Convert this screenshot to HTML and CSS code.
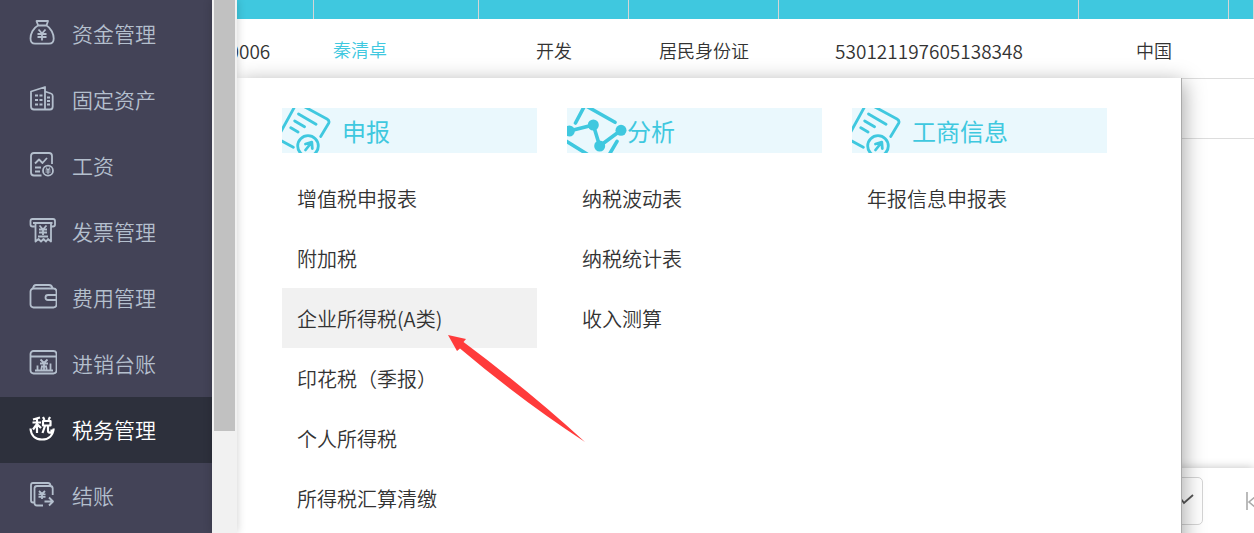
FILE: index.html
```html
<!DOCTYPE html>
<html lang="zh-CN">
<head>
<meta charset="utf-8">
<title>税务管理</title>
<link rel="stylesheet" href="styles.css">
</head>
<body>
<svg class="defs" aria-hidden="true">
  <symbol id="doc" viewBox="0 0 60 45">
    <g fill="none" stroke="currentColor" stroke-width="2.800" stroke-linecap="round" stroke-linejoin="round">
      <path d="M-1 23.500 12.500-1M22-1.500 45 11Q48 12.800 46.500 15.500L38.700 28.500M16.500 6 34 16.300M12.700 13 22.500 18.700M8.800 19.800 16 24M-1 32.500 11.300 39.300"/>
      <circle cx="26" cy="38" r="10.300"/>
      <path d="M23.500 42 29.500 34.500M23.500 36 29.800 34.200 30.300 40.500"/>
    </g>
  </symbol>
</svg>
<nav class="sidebar">
  <a class="item" href="#"><svg class="icon" viewBox="0 0 28 26"><path d="M7.500 1H19L17.500 5.500H9.200ZM9 5.500C4 8 1.500 14 1.500 18.500 1.500 22 3 23.700 6 23.700H20C23 23.700 24.700 22 24.700 18.500 24.700 14 22 8 17.500 5.500M9.500 9.500 13 13.500 16.500 9.500M13 13.500V20.500M8.500 14H17.500M8.500 17H17.500"/></svg>资金管理</a>
  <a class="item" href="#"><svg class="icon" viewBox="0 0 28 26"><path d="M16 23.500H5Q2 23.500 2 20.500V5.500L16 1ZM16 5.500 22 7.500Q23.700 8 23.700 10V20.500Q23.700 23.500 21 23.500H16"/><path stroke-dasharray="3 1.500" d="M6 9.500H13.500M6 14H13.500M6 18.500H13.500M18 11.500H22M18 15H22M18 18.500H22"/></svg>固定资产</a>
  <a class="item" href="#"><svg class="icon" viewBox="0 0 28 26"><path d="M12.500 23.500H5Q2 23.500 2 20.500V4Q2 1 5 1H20Q23 1 23 4V12M6 11.500 10 7.500 13.500 11 18 6M6 15.500H12M6 19.500H11"/><circle cx="19" cy="18.700" r="5"/><path stroke-width="1.200" d="M17 15.500 19 18 21 15.500M19 18V22M16.500 18H21.500M16.500 20H21.500"/></svg>工资</a>
  <a class="item" href="#"><svg class="icon" viewBox="0 0 28 26"><path d="M5.500 8.500H3.500Q1.500 8.500 1.500 6.500V3Q1.500 1 3.500 1H24Q26 1 26 3V6.500Q26 8.500 24 8.500H22M4 5H23.500M6.500 5V23.500L9.500 21 12 23.500 14.500 21 17 23.500 19 21 22 23.500V5M10.500 7.500 14 11.500 17.500 7.500M14 11.500V17M10 11.500H18M10 14.500H18M9 18.500H19"/></svg>发票管理</a>
  <a class="item" href="#"><svg class="icon" viewBox="0 0 28 26"><rect x="1.500" y="4.500" width="26" height="19" rx="3"/><path d="M4 4.500Q4.500 1 7 1H20Q23 1 23.500 4.500M27.500 11H19Q16.500 11 16.500 13.500T19 16H27.500"/></svg>费用管理</a>
  <a class="item" href="#"><svg class="icon" viewBox="0 0 28 26"><rect x="1.500" y="1" width="26" height="22.500" rx="3"/><path d="M1.500 6.500H27.500M6 20.500H24M8.500 20V15.500M12.500 20V17.500M17.500 20V17.500M21.500 20V13.500M11.500 9.500 15 13 18.500 9.500M15 13V20.500M11 13.500H19M12 16.500H18"/></svg>进销台账</a>
  <a class="item active" href="#"><svg class="icon" viewBox="0 0 28 26"><path d="M1.500 12.500C2 20 7 23.500 13 23.500S24 20 24.700 12.500M4 3.500 11 1.500M3.500 6.500H12M8 3V17M8 8 4 13.500M8.500 8.500 12 12M14 1 15.500 4M21 1 19.500 4M14 5H21.500V9.500H14ZM16 10 13.500 17M19 10V15Q19 17 22.500 16.500V13.500" stroke-width="2.200"/></svg>税务管理</a>
  <a class="item" href="#"><svg class="icon" viewBox="0 0 28 26"><path d="M5 20.500H4Q2 20.500 2 18.500V3Q2 1 4 1H19Q21 1 21.500 3.500M14 23.500H8Q5.500 23.500 5.500 21V6.500Q5.500 4 8 4H21Q23.700 4 23.700 6.500V13M10 9 13 12 16 9M13 12V17M9.500 12.300H16.500M9.500 14.800H16.500M15.500 19.500H24M20 15.500 24 19.500 20 23.500"/></svg>结账</a>
</nav>
<div class="scroll"><div class="thumb"></div></div>
<main class="main">
  <table class="grid">
    <colgroup><col class="c150"><col class="c165"><col class="c150"><col class="c150"><col class="c300"><col class="c150"><col></colgroup>
    <thead><tr><th></th><th></th><th></th><th></th><th></th><th></th><th></th></tr></thead>
    <tbody>
      <tr><td class="num">000006</td><td class="name"><a href="#">秦清卓</a></td><td>开发</td><td>居民身份证</td><td class="num">530121197605138348</td><td>中国</td><td></td></tr>
      <tr><td></td><td></td><td></td><td></td><td></td><td></td><td></td></tr>
    </tbody>
  </table>
  <footer class="pager">
    <select class="size" aria-label="每页条数"><option></option></select>
    <svg class="tick" viewBox="0 0 14 12"><path d="M1 6 4 10 13 2"/></svg>
    <button class="first" aria-label="首页"><svg viewBox="0 0 10 20"><path d="M3 1V19M12 5 5 11 12 17"/></svg></button>
  </footer>
  <section class="panel">
    <div class="group">
      <h2><svg class="art"><use href="#doc"/></svg>申报</h2>
      <a href="#">增值税申报表</a>
      <a href="#">附加税</a>
      <a class="hover" href="#">企业所得税(A类)</a>
      <a href="#">印花税（季报）</a>
      <a href="#">个人所得税</a>
      <a href="#">所得税汇算清缴</a>
    </div>
    <div class="group">
      <h2><svg class="art" viewBox="0 0 60 45"><g fill="none" stroke="currentColor" stroke-linecap="round"><path stroke-width="3.600" d="M8.500 15 17-1M20-1.500 48 14.300M-1 33 20 46M50 33.300 42 47"/><path stroke-width="3.600" d="M2.300 23 26.300 17 32.700 38 54 22.300"/></g><g fill="currentColor"><circle cx="2.300" cy="23" r="5.500"/><circle cx="26.300" cy="17" r="5.500"/><circle cx="32.700" cy="38" r="5.500"/><circle cx="54" cy="22.300" r="5.500"/></g></svg>分析</h2>
      <a href="#">纳税波动表</a>
      <a href="#">纳税统计表</a>
      <a href="#">收入测算</a>
    </div>
    <div class="group">
      <h2><svg class="art"><use href="#doc"/></svg>工商信息</h2>
      <a href="#">年报信息申报表</a>
    </div>
    <svg class="pointer" viewBox="0 0 137 108"><path fill="#ff3b3b" d="M0 0 18 4 15.500 7Q80 55 137 107 74 66 12 13.500L9 16Z"/></svg>
  </section>
</main>
</body>
</html>
```
FILE: styles.css
```css
* { box-sizing: border-box; }
body {
  margin: 0;
  height: 100vh;
  display: flex;
  overflow: hidden;
  background: #fff;
  color: #333;
  font-family: "Noto Sans CJK SC", sans-serif;
  font-weight: 350;
}
a { color: inherit; text-decoration: none; }
.defs { position: absolute; width: 0; height: 0; }

.sidebar { flex: none; width: 212px; padding-top: 1px; background: #434357; }
.item {
  display: flex;
  align-items: center;
  gap: 15px;
  height: 66px;
  padding: 0 0 2px 29px;
  font-size: 21px;
  color: #b4bfcd;
}
.item.active { background: #2d303c; color: #fff; }
.icon {
  width: 28px;
  height: 26px;
  fill: none;
  stroke: currentColor;
  stroke-width: 1.8;
  stroke-linejoin: round;
}

.scroll {
  flex: none;
  width: 25px;
  padding: 0 2px;
  background: #f1f1f1;
  box-shadow: 0 0 10px rgba(0, 0, 0, .2);
  z-index: 3;
}
.thumb { height: 431px; background: #c1c1c1; }

.main {
  flex: 1;
  min-width: 0;
  position: relative;
  display: flex;
  flex-direction: column;
  overflow: hidden;
}
.grid {
  width: calc(100% + 73px);
  margin-left: -73px;
  table-layout: fixed;
  border-collapse: separate;
  border-spacing: 0;
  font-size: 18px;
  text-align: center;
}
.c150 { width: 150px; }
.c165 { width: 165px; }
.c300 { width: 300px; }
th { height: 19px; padding: 0; background: #3fc8df; border-right: 1px solid #d5d5d5; }
td { height: 60px; padding: 3px 0 0; border-bottom: 1px solid #ddd; }
.num { font-size: 19px; }
.name { text-align: left; padding: 0 0 0 19px; color: #3fc8df; }

.pager {
  display: flex;
  align-items: center;
  justify-content: flex-end;
  height: 65px;
  margin-top: auto;
  box-shadow: 0 0 9px rgba(0, 0, 0, .25);
}
.size {
  width: 110px;
  height: 48px;
  margin-right: 41px;
  border: 1px solid #d5d5d5;
  border-radius: 5px;
  background: #fff;
  appearance: none;
}
.tick {
  position: absolute;
  right: 60px;
  bottom: 28px;
  width: 14px;
  height: 12px;
  fill: none;
  stroke: #555;
  stroke-width: 1.8;
}
.first { display: flex; padding: 0; border: 0; background: none; }
.first svg { width: 10px; height: 20px; fill: none; stroke: #aaa; stroke-width: 1.6; }

.panel {
  position: absolute;
  top: 78px;
  bottom: -20px;
  left: 0;
  right: 72px;
  display: flex;
  gap: 30px;
  padding: 30px 45px;
  background: #fff;
  border-right: 1px solid #aaa;
  box-shadow: 2px 4px 20px rgba(0, 0, 0, .35);
  z-index: 2;
}
.group { width: 255px; }
.group h2 {
  display: flex;
  align-items: center;
  height: 45px;
  margin: 0 0 15px;
  background: #eaf8fd;
  color: #3fc8df;
  font-size: 24px;
  font-weight: 400;
}
.art { width: 60px; height: 45px; overflow: hidden; }
.group a {
  display: flex;
  align-items: center;
  height: 60px;
  padding-left: 15px;
  font-size: 20px;
}
.group .hover { background: #f1f1f1; }
.pointer { position: absolute; left: 211px; top: 257px; width: 137px; height: 108px; }
```
